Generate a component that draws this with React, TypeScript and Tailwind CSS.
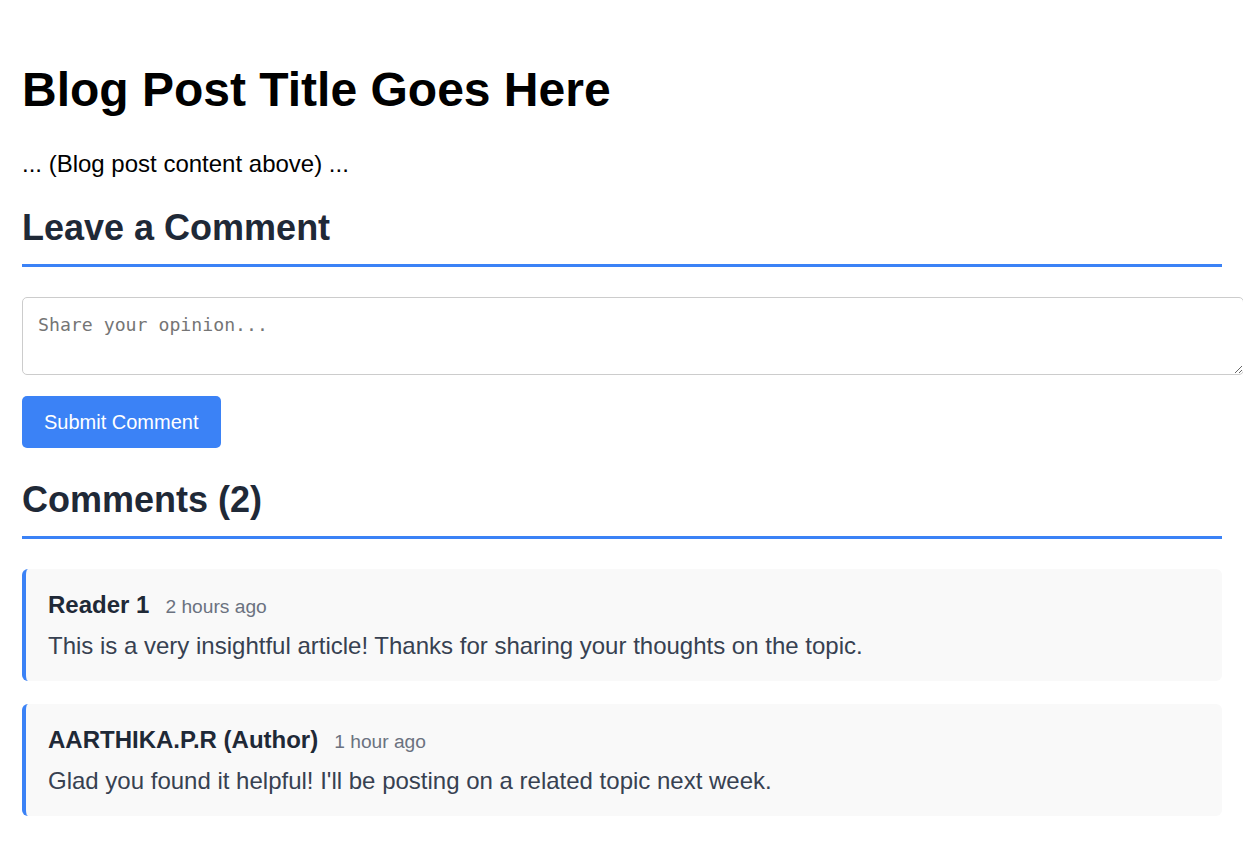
import React from 'react';

const comments = [
  {
    name: 'Reader 1',
    time: '2 hours ago',
    text: 'This is a very insightful article! Thanks for sharing your thoughts on the topic.',
  },
  {
    name: 'AARTHIKA.P.R (Author)',
    time: '1 hour ago',
    text: "Glad you found it helpful! I'll be posting on a related topic next week.",
  },
];

const App = () => {
  return (
    <div className="min-h-screen overflow-x-hidden bg-white font-['Liberation_Sans',Arial,sans-serif]">
      <div className="w-[1200px] ml-[22px] pt-[62px] pb-8">
        <h1 className="text-[48px] leading-[56px] font-bold text-black">Blog Post Title Goes Here</h1>
        <p className="mt-[32px] text-[24px] leading-[28px] text-black">... (Blog post content above) ...</p>

        <h2 className="mt-[28px] text-[36px] leading-[44px] font-bold text-[#1f2937] pb-[14px] border-b-[3px] border-[#3b82f6]">
          Leave a Comment
        </h2>
        <textarea
          placeholder="Share your opinion..."
          className="block mt-[30px] w-[1222px] max-w-none h-[78px] px-[15px] py-[16px] border border-[#cccccc] rounded-[5px] font-['DejaVu_Sans_Mono',monospace] text-[18.2px] leading-[22px] placeholder:text-[#757575]"
        />
        <button className="mt-[21px] h-[52px] px-[22px] rounded-[5px] bg-[#3b82f6] text-white text-[20px]">
          Submit Comment
        </button>

        <h2 className="mt-[30px] text-[36px] leading-[44px] font-bold text-[#1f2937] pb-[14px] border-b-[3px] border-[#3b82f6]">
          Comments (2)
        </h2>
        <div className="mt-[30px] flex flex-col gap-[23px]">
          {comments.map((c) => (
            <div key={c.name} className="h-[112px] bg-[#f9f9f9] border-l-4 border-[#3b82f6] rounded-[6px] pl-[22px] pt-[22px]">
              <div className="flex items-baseline gap-4 leading-[28px]">
                <span className="text-[24px] font-bold text-[#1f2937]">{c.name}</span>
                <span className="text-[19.2px] text-[#6b7280]">{c.time}</span>
              </div>
              <p className="mt-[11px] text-[24px] leading-[28px] text-[#374151]">{c.text}</p>
            </div>
          ))}
        </div>
      </div>
    </div>
  );
};

export default App;
